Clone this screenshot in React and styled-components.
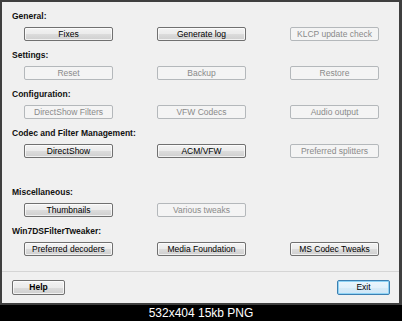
import React from 'react';
import styled, { createGlobalStyle } from 'styled-components';

const GlobalStyle = createGlobalStyle`
  html, body {
    margin: 0;
    padding: 0;
    background: #000;
  }
`;

const sections = [
  { title: 'General:', buttons: [
    { label: 'Fixes' },
    { label: 'Generate log' },
    { label: 'KLCP update check', disabled: true },
  ] },
  { title: 'Settings:', buttons: [
    { label: 'Reset', disabled: true },
    { label: 'Backup', disabled: true },
    { label: 'Restore', disabled: true },
  ] },
  { title: 'Configuration:', buttons: [
    { label: 'DirectShow Filters', disabled: true },
    { label: 'VFW Codecs', disabled: true },
    { label: 'Audio output', disabled: true },
  ] },
  { title: 'Codec and Filter Management:', buttons: [
    { label: 'DirectShow' },
    { label: 'ACM/VFW' },
    { label: 'Preferred splitters', disabled: true },
  ] },
  { title: 'Miscellaneous:', spaced: true, buttons: [
    { label: 'Thumbnails' },
    { label: 'Various tweaks', disabled: true },
  ] },
  { title: 'Win7DSFilterTweaker:', buttons: [
    { label: 'Preferred decoders' },
    { label: 'Media Foundation' },
    { label: 'MS Codec Tweaks' },
  ] },
];

const App = () => {
  return (
    <>
      <GlobalStyle />
      <Screen>
        <Window>
          <Content>
            { sections.map(s => (
              <Section key={ s.title } spaced={ s.spaced }>
                <Title>{ s.title }</Title>
                <ButtonGrid>
                  { s.buttons.map(b => (
                    <Button key={ b.label } disabled={ b.disabled }>{ b.label }</Button>
                  )) }
                </ButtonGrid>
              </Section>
            )) }
          </Content>
          <Footer>
            <FooterButton bold>Help</FooterButton>
            <FooterButton $default>Exit</FooterButton>
          </Footer>
        </Window>
        <Caption>532x404 15kb PNG</Caption>
      </Screen>
    </>
  );
};

const Screen = styled.div`
  width: 402px;
  height: 321px;
  display: flex;
  flex-direction: column;
  background: #000;
  font-family: "Liberation Sans", Arial, sans-serif;
`;

const Window = styled.div`
  height: 305px;
  box-sizing: border-box;
  border: 2px solid #3f3f3f;
  border-right-width: 3px;
  background: #f0f0f0;
  display: flex;
  flex-direction: column;
`;

const Content = styled.div`
  padding: 8px 0 0 10px;
  display: flex;
  flex-direction: column;
  gap: 8px;
  flex: 1;
`;

const Section = styled.section`
  display: flex;
  flex-direction: column;
  gap: 5px;
  margin-top: ${ p => p.spaced ? '20px' : '0' };
`;

const Title = styled.div`
  height: 12px;
  line-height: 12px;
  font-size: 8.5px;
  font-weight: bold;
  color: #111;
`;

const ButtonGrid = styled.div`
  display: grid;
  grid-template-columns: repeat(3, 89px);
  column-gap: 44px;
  margin-left: 12px;
`;

const Button = styled.div`
  height: 14px;
  box-sizing: border-box;
  border: 1px solid ${ p => p.disabled ? '#b4b8bb' : '#707070' };
  border-radius: 2px;
  background: ${ p => p.disabled
    ? '#f4f4f4'
    : 'linear-gradient(#f3f3f3 0%, #ebebeb 50%, #dcdcdc 51%, #cfcfcf 100%)' };
  box-shadow: ${ p => p.disabled ? 'none' : 'inset 0 0 0 1px rgba(255,255,255,0.7)' };
  color: ${ p => p.disabled ? '#8a8a8a' : '#000' };
  font-size: 8.5px;
  line-height: 12px;
  text-align: center;
  white-space: nowrap;
`;

const Footer = styled.div`
  height: 32px;
  box-sizing: border-box;
  border-top: 1px solid #d5d5d5;
  display: flex;
  justify-content: space-between;
  align-items: flex-start;
  padding: 8px 9px 0 10px;
`;

const FooterButton = styled.div`
  width: 53px;
  height: 15px;
  box-sizing: border-box;
  border: 1px solid ${ p => p.$default ? '#3c7fb1' : '#707070' };
  border-radius: 2px;
  background: ${ p => p.$default
    ? 'linear-gradient(#eaf6fd 0%, #e2f1fb 50%, #d6ebf8 51%, #cfe6f6 100%)'
    : 'linear-gradient(#f3f3f3 0%, #ebebeb 50%, #dcdcdc 51%, #cfcfcf 100%)' };
  box-shadow: ${ p => p.$default ? 'inset 0 0 0 1px #8fd3f5' : 'inset 0 0 0 1px rgba(255,255,255,0.7)' };
  font-size: 8.5px;
  font-weight: ${ p => p.bold ? 'bold' : 'normal' };
  line-height: 13px;
  text-align: center;
  color: #000;
`;

const Caption = styled.div`
  flex: 1;
  color: #fff;
  font-size: 12px;
  line-height: 16px;
  text-align: center;
  font-family: "Liberation Sans", Arial, sans-serif;
`;

export default App;
